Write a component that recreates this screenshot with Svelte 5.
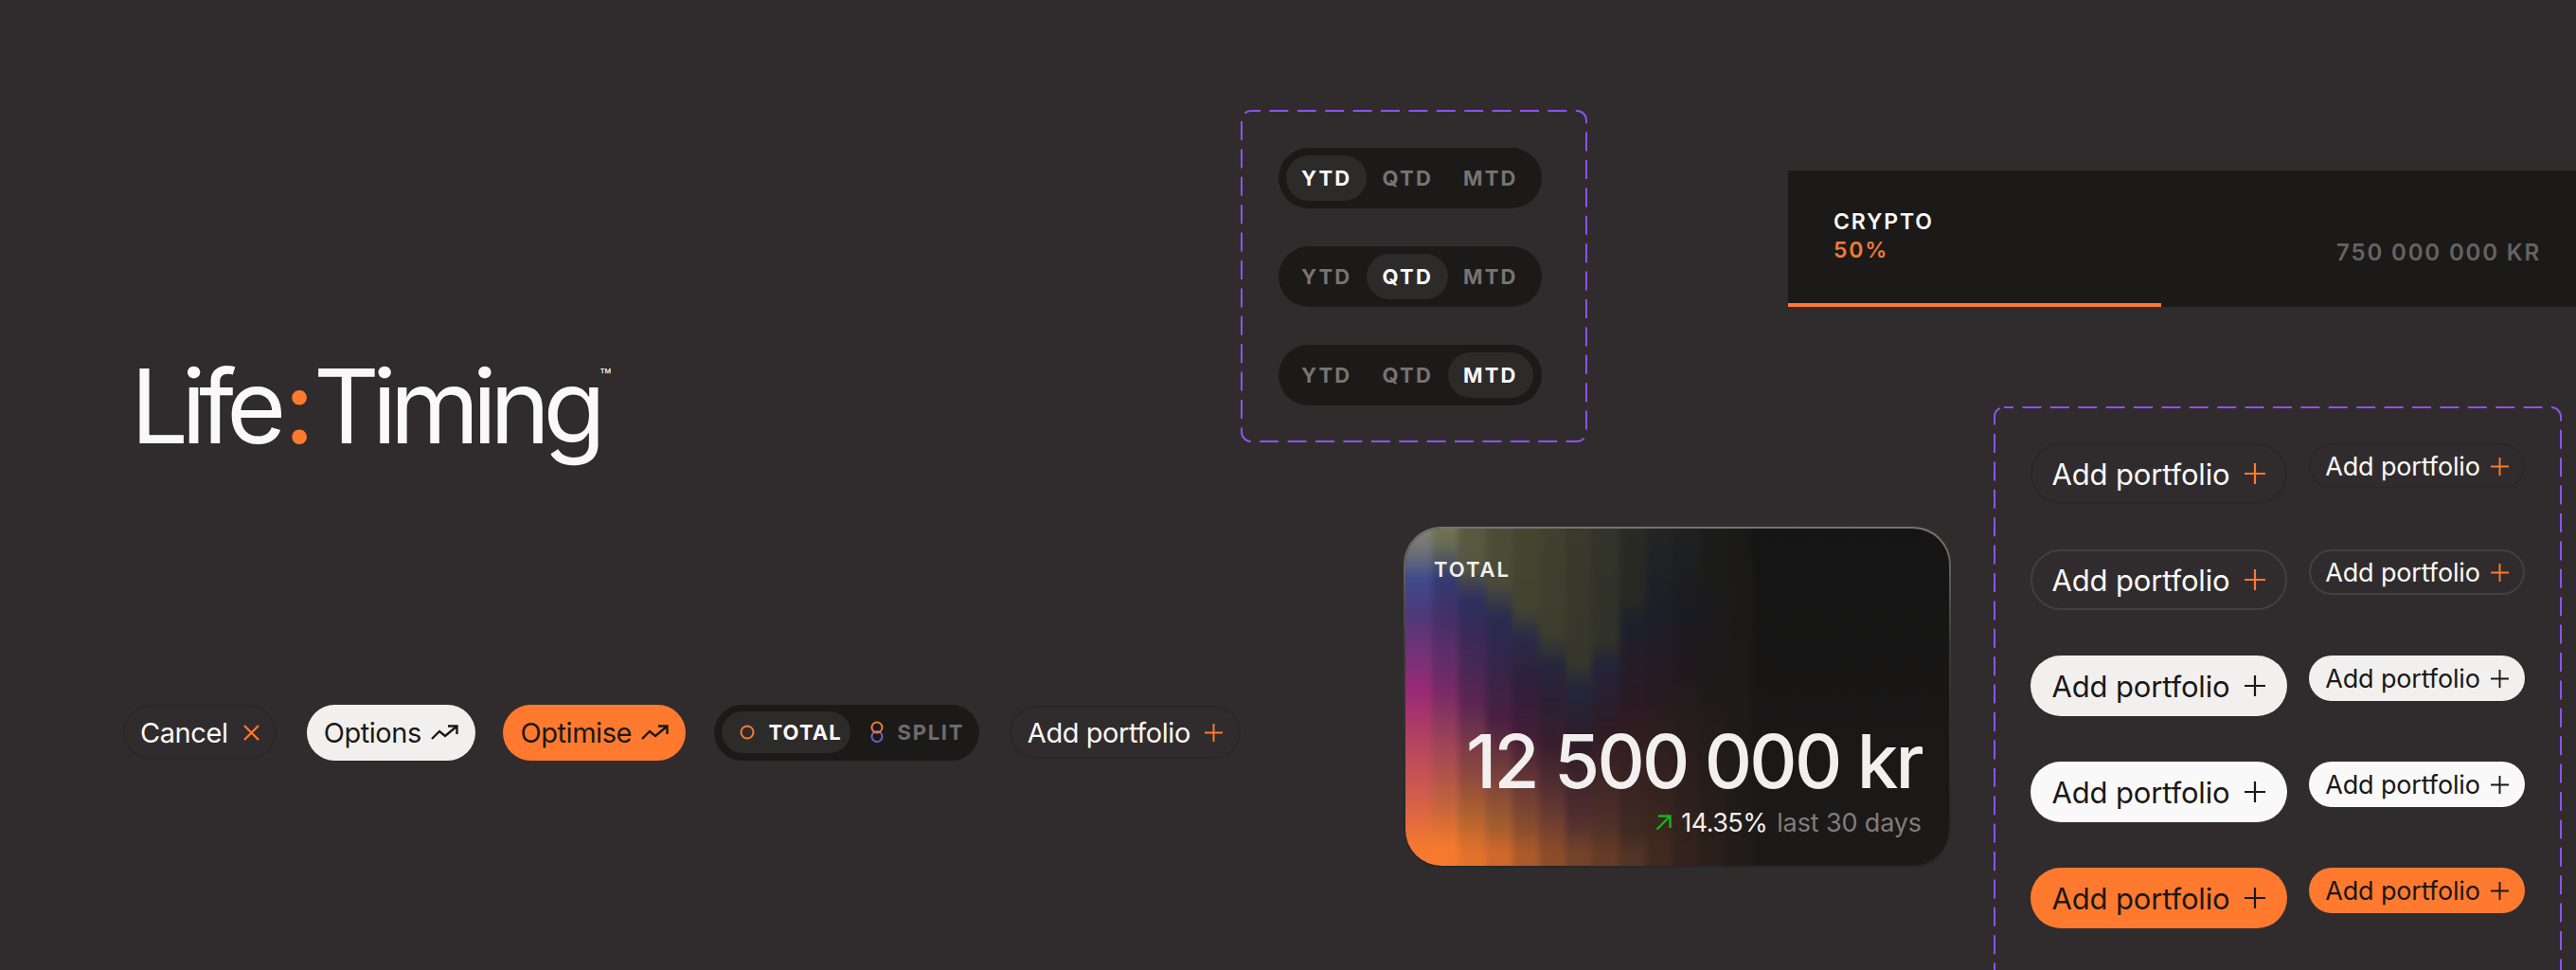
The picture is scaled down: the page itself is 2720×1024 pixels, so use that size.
<script>
	const addRows = ['ghost', 'outline', 'soft', 'white', 'orange'];
	const periods = ['YTD', 'QTD', 'MTD'];

	// one vertical strip per entry: [y in px, colour]
	const strips = [
		[[0, '#8b8b78'], [34, '#6c7076'], [62, '#3f4a8c'], [100, '#4f3a78'], [180, '#9a2a75'], [235, '#b5455f'], [285, '#cf5a50'], [345, '#f47a2f']],
		[[0, '#74784f'], [26, '#666a55'], [62, '#343a74'], [100, '#443068'], [180, '#782a68'], [250, '#a84a54'], [300, '#c4643c'], [345, '#f67a2e']],
		[[0, '#585a40'], [48, '#55573f'], [84, '#2c2f5e'], [120, '#3a2a58'], [190, '#5a2552'], [270, '#8f4a40'], [310, '#b0622e'], [350, '#e2722c']],
		[[0, '#4c4d38'], [66, '#4a4b38'], [102, '#2a2b50'], [150, '#35254a'], [210, '#4a1f42'], [280, '#804838'], [320, '#a05c2e'], [350, '#cf682b']],
		[[0, '#45462f'], [92, '#434430'], [124, '#2a2a46'], [170, '#301f3c'], [225, '#421d38'], [290, '#703e34'], [330, '#90502c'], [350, '#ad5a2a']],
		[[0, '#40412f'], [120, '#3d3e2e'], [152, '#26263c'], [190, '#2c1f34'], [235, '#381d2e'], [300, '#603632'], [350, '#8c4c2a']],
		[[0, '#393a2c'], [148, '#37382b'], [178, '#25253a'], [240, '#2f1c2a'], [320, '#553030'], [350, '#75422a']],
		[[0, '#33342a'], [128, '#303128'], [152, '#23243a'], [220, '#2f1b25'], [320, '#4f3028'], [350, '#653a26']],
		[[0, '#2a2b26'], [80, '#282924'], [112, '#1e1f2c'], [200, '#2d1a22'], [330, '#3f2a22'], [350, '#533325']],
		[[0, '#242522'], [100, '#1d1d28'], [180, '#261a20'], [350, '#40291f']],
		[[0, '#20211f'], [100, '#1b1b22'], [160, '#211a1d'], [350, '#33231c']],
		[[0, '#1c1d1b'], [140, '#1d1a1b'], [350, '#2a1f1a']],
		[[0, '#1a1a19'], [350, '#211c19']]
	];

	const stripStyle = (stops) =>
		`background: linear-gradient(180deg, ${stops.map(([y, c]) => `${c} ${y}px`).join(', ')})`;
</script>

{#snippet plus(size)}
	<svg class="icon" width={size} height={size} viewBox="0 0 22 22" fill="none" stroke="currentColor" stroke-width="2.2">
		<path d="M11 0V22M0 11H22" />
	</svg>
{/snippet}

{#snippet trend()}
	<svg class="icon" width="29" height="17" viewBox="0 0 29 17" fill="none" stroke="currentColor" stroke-width="2.4">
		<path d="M1 15L9 7L15 12L27 2M18 1.5H27.5V10" />
	</svg>
{/snippet}

{#snippet frame()}
	<svg class="dash" width="100%" height="100%" fill="none">
		<rect x="1" y="1" width="calc(100% - 2px)" height="calc(100% - 2px)" rx="10" stroke="#8f52ee" stroke-width="2" stroke-dasharray="20 9.4" stroke-dashoffset="10" />
	</svg>
{/snippet}

<main class="board">
	<section class="left">
		<h1 class="logo">Life<span class="colon">:</span>Timing<span class="tm">™</span></h1>

		<div class="toolbar">
			<button class="pill cancel">Cancel
				<svg class="icon x" width="17" height="17" viewBox="0 0 17 17" fill="none" stroke="currentColor" stroke-width="2.2"><path d="M1 1L16 16M16 1L1 16" /></svg>
			</button>
			<button class="pill options">Options {@render trend()}</button>
			<button class="pill optimise">Optimise {@render trend()}</button>

			<div class="switch">
				<span class="seg on">
					<svg width="16" height="16" viewBox="0 0 16 16" fill="none" stroke="#f07b35" stroke-width="2"><circle cx="8" cy="8" r="6.5" /></svg>
					TOTAL
				</span>
				<span class="seg off">
					<svg width="14" height="24" viewBox="0 0 14 24" fill="none" stroke-width="2"><circle cx="7" cy="16.5" r="5.5" stroke="#5d6ac8" /><circle cx="7" cy="7" r="5.5" stroke="#f07b35" /></svg>
					SPLIT
				</span>
			</div>

			<button class="pill add">Add portfolio {@render plus(19)}</button>
		</div>
	</section>

	<section class="middle">
		<div class="frame periods">
			{@render frame()}
			{#each periods as active}
				<div class="tabs">
					{#each periods as p}
						<span class="tab" class:on={p === active}>{p}</span>
					{/each}
				</div>
			{/each}
		</div>

		<article class="card">
			<div class="card-inner">
				<div class="strips">
					{#each strips as stops}
						<i style={stripStyle(stops)}></i>
					{/each}
				</div>
				<div class="card-body">
					<div class="card-label">TOTAL</div>
					<div class="card-foot">
						<div class="amount">12 500 000 kr</div>
						<div class="change">
							<svg width="17" height="17" viewBox="0 0 17 17" fill="none" stroke="#17b427" stroke-width="2.4"><path d="M1.5 15.5L15 2M3 1.5H15.5V14" /></svg>
							<span class="pct">14.35%</span>
							<span class="period">last 30 days</span>
						</div>
					</div>
				</div>
			</div>
		</article>
	</section>

	<section class="right">
		<div class="crypto">
			<div class="crypto-row">
				<div>
					<div class="crypto-name">CRYPTO</div>
					<div class="crypto-pct">50%</div>
				</div>
				<div class="crypto-value">750 000 000 KR</div>
			</div>
			<div class="bar"></div>
		</div>

		<div class="frame adds">
			{@render frame()}
			{#each addRows as kind}
				<div class="add-row">
					<button class="pill big {kind}">Add portfolio {@render plus(22)}</button>
					<button class="pill small {kind}">Add portfolio {@render plus(19)}</button>
				</div>
			{/each}
		</div>
	</section>
</main>

<style>
	:global(body) {
		margin: 0;
		background: #302c2d;
		overflow: hidden;
	}

	.board {
		display: flex;
		width: 2720px;
		height: 1024px;
		overflow: hidden;
		background: #302c2d;
		color: #faf9f9;
		font-family: Inter, 'Liberation Sans', sans-serif;
	}

	.left {
		flex: 0 0 1310px;
		width: 1310px;
		padding-left: 130px;
		box-sizing: border-box;
		white-space: nowrap;
	}

	.logo {
		margin: 372px 0 0 8px;
		font-size: 108px;
		line-height: 114px;
		font-weight: 420;
		letter-spacing: -0.07em;
	}

	.colon {
		color: #ff7a2f;
		font-weight: 500;
		margin: 0 6px 0 5px;
	}

	.tm {
		display: inline-block;
		font-size: 20px;
		line-height: 14px;
		letter-spacing: 0;
		vertical-align: 64px;
		margin-left: 1px;
	}

	.toolbar {
		display: flex;
		align-items: center;
		margin-top: 257px;
		height: 60px;
	}

	.pill {
		display: inline-flex;
		align-items: center;
		justify-content: center;
		box-sizing: border-box;
		border: 2px solid transparent;
		border-radius: 32px;
		background: none;
		color: #faf9f9;
		font: 430 29px Inter, 'Liberation Sans', sans-serif;
		letter-spacing: -0.015em;
		padding: 0;
		white-space: nowrap;
	}

	.icon {
		flex: none;
		color: #ff7a2f;
	}

	.cancel {
		width: 162px;
		height: 58px;
		gap: 16px;
		border-color: #2b2728;
	}

	.options,
	.optimise {
		height: 59px;
		gap: 10px;
		color: #1a1817;
	}

	.options {
		width: 179px;
		margin-left: 32px;
		background: #f2f0ef;
	}

	.optimise {
		width: 194px;
		margin-left: 29px;
		background: #ff7a2f;
	}

	.options .icon,
	.optimise .icon {
		color: #1a1817;
	}

	.switch {
		display: flex;
		align-items: center;
		height: 59px;
		width: 280px;
		margin-left: 30px;
		padding: 0 8px;
		box-sizing: border-box;
		border-radius: 30px;
		background: #1c1a19;
	}

	.seg {
		flex: none;
		display: flex;
		align-items: center;
		gap: 14px;
		height: 44px;
		padding: 0 0 0 19px;
		border-radius: 22px;
		font-size: 22px;
		font-weight: 700;
		letter-spacing: 0.05em;
		color: #6f6c6b;
	}

	.seg svg {
		flex: none;
	}

	.seg.on {
		width: 136px;
		box-sizing: border-box;
		background: #2d2a2a;
		color: #faf9f9;
	}

	.seg.off {
		padding-left: 21px;
		letter-spacing: 0.08em;
	}

	.add {
		width: 245px;
		height: 56px;
		gap: 15px;
		margin-left: 32px;
		border-color: #2b2728;
	}

	.middle {
		flex: 0 0 578px;
		min-width: 0;
		padding-top: 116px;
	}

	.frame {
		position: relative;
		box-sizing: border-box;
	}

	.dash {
		position: absolute;
		inset: 0;
		pointer-events: none;
	}

	.periods {
		display: flex;
		flex-direction: column;
		gap: 40px;
		width: 366px;
		height: 351px;
		padding: 40px 0 0 40px;
	}

	.tabs {
		display: flex;
		align-items: center;
		width: 278px;
		height: 64px;
		padding: 0 8px;
		box-sizing: border-box;
		border-radius: 32px;
		background: #1c1a19;
	}

	.tab {
		display: flex;
		align-items: center;
		height: 48px;
		padding: 0 16px;
		border-radius: 24px;
		font-size: 22px;
		font-weight: 700;
		letter-spacing: 0.1em;
		color: #777473;
	}

	.tab.on {
		background: #2d2a2a;
		color: #faf9f9;
	}

	.card {
		width: 578px;
		height: 360px;
		margin: 89px 0 0 172px;
		padding: 2px;
		box-sizing: border-box;
		border-radius: 40px;
		background: linear-gradient(180deg, #77756d, #3b3937 35%, #2a2726 80%);
	}

	.card-inner {
		display: grid;
		height: 100%;
		border-radius: 38px;
		overflow: hidden;
		background: linear-gradient(180deg, #151515, #1c1a19);
	}

	.strips,
	.card-body {
		grid-area: 1 / 1;
	}

	/* blur softens the strip edges, so it runs a little past the card on every side */
	.strips {
		display: flex;
		height: calc(100% + 16px);
		margin: -8px 0 0 -8px;
		filter: blur(3px);
	}

	.strips i {
		display: block;
		width: 28.2px;
		height: 100%;
	}

	.strips i:first-child {
		width: 36.2px;
	}

	.card-body {
		display: flex;
		flex-direction: column;
		justify-content: space-between;
		padding: 30px 29px 29px 30px;
		z-index: 1;
		position: relative;
	}

	.card-label {
		font-size: 22px;
		font-weight: 600;
		letter-spacing: 0.09em;
		color: #f2f0ef;
	}

	.card-foot {
		text-align: right;
	}

	.amount {
		font-size: 78px;
		line-height: 86px;
		font-weight: 500;
		letter-spacing: -0.035em;
		color: #f2f0ef;
	}

	.change {
		display: flex;
		align-items: center;
		justify-content: flex-end;
		gap: 10px;
		margin-top: 5px;
		font-size: 27px;
		letter-spacing: -0.02em;
	}

	.pct {
		color: #f2f0ef;
	}

	.period {
		color: #807d7b;
		letter-spacing: -0.005em;
	}

	.right {
		flex: 1;
		min-width: 0;
		padding-top: 180px;
	}

	.crypto {
		display: flex;
		flex-direction: column;
		height: 144px;
		background: #1c1a19;
	}

	.crypto-row {
		flex: 1;
		display: flex;
		justify-content: space-between;
		padding: 39px 37px 0 48px;
		font-size: 23px;
		font-weight: 600;
		letter-spacing: 0.08em;
		line-height: 30px;
	}

	.crypto-pct {
		color: #f07b35;
	}

	.crypto-value {
		align-self: flex-start;
		margin-top: 33px;
		font-size: 24px;
		color: #666361;
	}

	.bar {
		width: 394px;
		height: 4px;
		background: #ff7a2f;
	}

	.adds {
		display: flex;
		flex-direction: column;
		gap: 48px;
		width: 600px;
		height: 640px;
		margin: 105px 0 0 217px;
		padding: 39px 0 0 39px;
	}

	.add-row {
		display: flex;
		align-items: flex-start;
		gap: 23px;
	}

	.big {
		flex: none;
		width: 271px;
		height: 64px;
		gap: 16px;
		font-size: 31px;
		letter-spacing: -0.005em;
	}

	.small {
		flex: none;
		width: 228px;
		height: 48px;
		gap: 11px;
		font-size: 27px;
		letter-spacing: -0.005em;
	}

	.pill.ghost {
		border-color: #2b2728;
	}

	.pill.outline {
		border-color: #433f3f;
	}

	.pill.soft,
	.pill.white,
	.pill.orange {
		color: #1a1817;
	}

	.pill.soft {
		background: #f2f0ef;
	}

	.pill.white {
		background: #faf9f9;
	}

	.pill.orange {
		background: #ff7a2f;
	}

	.soft .icon,
	.white .icon,
	.orange .icon {
		color: #1a1817;
	}
</style>
